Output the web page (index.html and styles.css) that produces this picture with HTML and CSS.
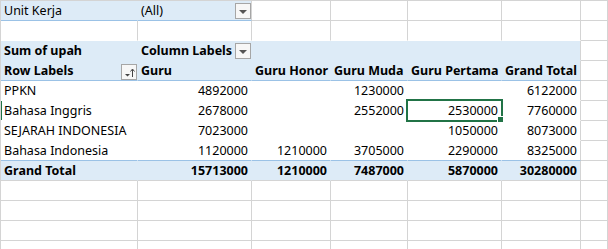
FILE: index.html
```html
<!DOCTYPE html>
<html>
<head>
    <title>Pivot - upah</title>
    <link rel="stylesheet" href="styles.css">
</head>
<body>

    <div class="sheet">

        <!-- Report filter -->
        <div class="row">
            <div class="cell hdr nr bb">Unit Kerja</div>
            <div class="cell hdr bb">(All)<span class="drop"><i class="tri"></i></span></div>
            <div class="cell"></div>
            <div class="cell"></div>
            <div class="cell"></div>
            <div class="cell"></div>
            <div class="cell"></div>
        </div>

        <div class="row">
            <div class="cell nb"></div>
            <div class="cell nb"></div>
            <div class="cell nb"></div>
            <div class="cell nb"></div>
            <div class="cell nb"></div>
            <div class="cell nb"></div>
            <div class="cell"></div>
        </div>

        <!-- Pivot header -->
        <div class="row">
            <div class="cell hdr b nr nb">Sum of upah</div>
            <div class="cell hdr b nr nb">Column Labels<span class="drop"><i class="tri"></i></span></div>
            <div class="cell hdr nr nb"></div>
            <div class="cell hdr nr nb"></div>
            <div class="cell hdr nr nb"></div>
            <div class="cell hdr nb"></div>
            <div class="cell"></div>
        </div>

        <div class="row">
            <div class="cell hdr b nr bb">Row Labels<span class="drop sort">
                <svg width="14" height="13" viewBox="0 0 14 13">
                    <path d="M3 8h5l-2.5 2.5z" fill="#444"/>
                    <path d="M10.5 11V3.5" stroke="#444" stroke-width="1"/>
                    <path d="M8.5 5.5l2-2.5 2 2.5" fill="none" stroke="#444" stroke-width="1"/>
                </svg>
            </span></div>
            <div class="cell hdr b nr bb">Guru</div>
            <div class="cell hdr b nr bb">Guru Honor</div>
            <div class="cell hdr b nr bb">Guru Muda</div>
            <div class="cell hdr b nr bb">Guru Pertama</div>
            <div class="cell hdr b bb">Grand Total</div>
            <div class="cell"></div>
        </div>

        <!-- Data rows -->
        <div class="row">
            <div class="cell nr nb">PPKN</div>
            <div class="cell num nr nb">4892000</div>
            <div class="cell num nr nb"></div>
            <div class="cell num nr nb">1230000</div>
            <div class="cell num nr nb"></div>
            <div class="cell num nb">6122000</div>
            <div class="cell"></div>
        </div>

        <div class="row">
            <div class="cell nr nb picked-row">Bahasa Inggris</div>
            <div class="cell num nr nb">2678000</div>
            <div class="cell num nr nb"></div>
            <div class="cell num nr nb">2552000</div>
            <div class="cell num nr nb active">2530000</div>
            <div class="cell num nb">7760000</div>
            <div class="cell"></div>
        </div>

        <div class="row">
            <div class="cell nr nb">SEJARAH INDONESIA</div>
            <div class="cell num nr nb">7023000</div>
            <div class="cell num nr nb"></div>
            <div class="cell num nr nb"></div>
            <div class="cell num nr nb">1050000</div>
            <div class="cell num nb">8073000</div>
            <div class="cell"></div>
        </div>

        <div class="row">
            <div class="cell nr bb">Bahasa Indonesia</div>
            <div class="cell num nr bb">1120000</div>
            <div class="cell num nr bb">1210000</div>
            <div class="cell num nr bb">3705000</div>
            <div class="cell num nr bb">2290000</div>
            <div class="cell num bb">8325000</div>
            <div class="cell"></div>
        </div>

        <!-- Totals -->
        <div class="row">
            <div class="cell hdr b nr">Grand Total</div>
            <div class="cell hdr b num nr">15713000</div>
            <div class="cell hdr b num nr">1210000</div>
            <div class="cell hdr b num nr">7487000</div>
            <div class="cell hdr b num nr">5870000</div>
            <div class="cell hdr b num">30280000</div>
            <div class="cell"></div>
        </div>

        <!-- Empty sheet -->
        <div class="row">
            <div class="cell"></div><div class="cell"></div><div class="cell"></div><div class="cell"></div>
            <div class="cell"></div><div class="cell"></div><div class="cell"></div>
        </div>
        <div class="row">
            <div class="cell"></div><div class="cell"></div><div class="cell"></div><div class="cell"></div>
            <div class="cell"></div><div class="cell"></div><div class="cell"></div>
        </div>
        <div class="row">
            <div class="cell"></div><div class="cell"></div><div class="cell"></div><div class="cell"></div>
            <div class="cell"></div><div class="cell"></div><div class="cell"></div>
        </div>
        <div class="row">
            <div class="cell"></div><div class="cell"></div><div class="cell"></div><div class="cell"></div>
            <div class="cell"></div><div class="cell"></div><div class="cell"></div>
        </div>

    </div>

</body>
</html>
```
FILE: styles.css
```css
body {
    margin: 0;
    overflow: hidden;
    background: white;
    font-family: "Noto Sans", sans-serif;
    font-size: 12.5px;
    color: black;
}
.sheet {
    height: 100vh;
    overflow: hidden;
    border-top: 1px solid #d4d4d4;
    border-left: 1px solid #d4d4d4;
}
.row {
    display: grid;
    grid-template-columns: 137px 114px 79px 77px 94px 79px minmax(0, 1fr);
}
.cell {
    position: relative;
    height: 20px;
    box-sizing: border-box;
    border-right: 1px solid #d4d4d4;
    border-bottom: 1px solid #d4d4d4;
    padding: 0 3px 2px 3px;
    line-height: 14px;
    display: flex;
    align-items: flex-end;
    white-space: nowrap;
}
.hdr {
    background: #ddebf7;
}
.b {
    font-weight: bold;
}
.num {
    justify-content: flex-end;
}
/* pivot cells hide the sheet grid */
.nr {
    border-right-color: transparent;
}
.nb {
    border-bottom-color: transparent;
}
.bb {
    border-bottom-color: #9bc2e6;
}

/* filter dropdown buttons */
.drop {
    position: absolute;
    right: 0;
    top: 2px;
    width: 16px;
    height: 16px;
    box-sizing: border-box;
    border: 1px solid #a6a6a6;
    background: #f7f7f7;
    display: flex;
    align-items: center;
    justify-content: center;
}
.tri {
    width: 0;
    height: 0;
    border-left: 4px solid transparent;
    border-right: 4px solid transparent;
    border-top: 4px solid #555;
    margin-top: 1px;
}
.drop.sort {
    top: 3px;
}

/* selected cell */
.active::after {
    content: "";
    position: absolute;
    left: -2px;
    top: -2px;
    right: -2px;
    bottom: -2px;
    border: 2px solid #217346;
}
.active::before {
    content: "";
    position: absolute;
    right: -3px;
    bottom: -3px;
    width: 5px;
    height: 5px;
    background: #217346;
    border: 1px solid white;
    z-index: 1;
}
.picked-row::before {
    content: "";
    position: absolute;
    left: -1px;
    top: 0;
    bottom: 0;
    width: 2px;
    background: #217346;
}
```
